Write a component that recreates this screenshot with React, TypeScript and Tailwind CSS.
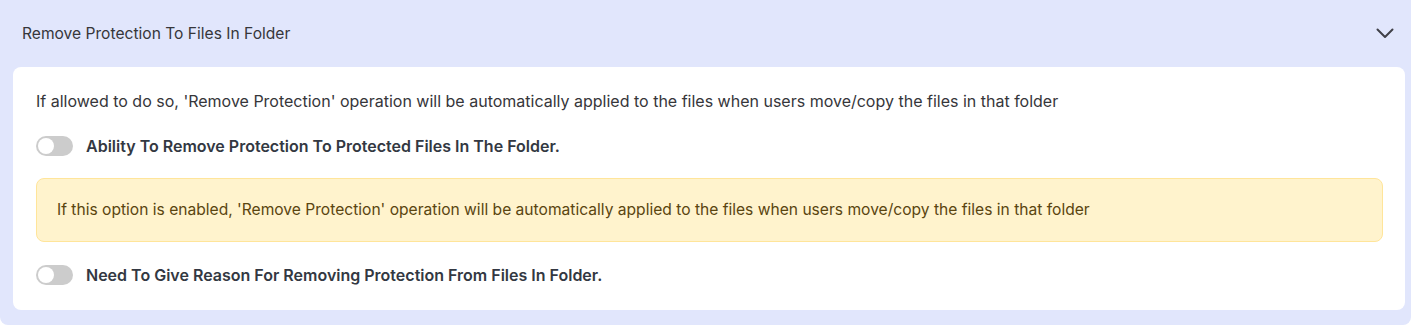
import React from "react";

function Toggle() {
  return (
    <div className="w-[37px] h-[20px] rounded-full bg-[#cccccc] p-[2px] flex items-center shrink-0">
      <div className="w-[16px] h-[16px] rounded-full bg-white" />
    </div>
  );
}

export default function App() {
  return (
    <div className="w-[1411px] h-[327px] bg-white" style={{ fontFamily: "Inter, 'Noto Sans', sans-serif" }}>
      <div className="h-[325px] bg-[#e1e6fc] rounded-b-[8px] flex flex-col">
        <div className="h-[67px] flex items-center justify-between pl-[22px] pr-[16px]">
          <span className="text-[15.6px] text-[#36363a] pt-[1px]">Remove Protection To Files In Folder</span>
          <svg width="18" height="11" viewBox="0 0 18 11" fill="none" className="mr-[1px]">
            <path d="M1.5 1.5 L9 9 L16.5 1.5" stroke="#404048" strokeWidth="2" strokeLinecap="round" strokeLinejoin="round" />
          </svg>
        </div>
        <div className="ml-[13px] mr-[6px] h-[243px] bg-white rounded-[8px] px-[23px] pt-[24px] flex flex-col">
          <p className="text-[16px] text-[#36363a] leading-[20px]">
            If allowed to do so, 'Remove Protection' operation will be automatically applied to the files when users move/copy the files in that folder
          </p>
          <div className="flex items-center gap-[13px] mt-[25px] h-[20px]">
            <Toggle />
            <span className="text-[16px] font-semibold text-[#333842] leading-[20px]">Ability To Remove Protection To Protected Files In The Folder.</span>
          </div>
          <div className="mt-[22px] h-[64px] mr-[-1px] bg-[#fff3cd] border border-[#ffe59a] rounded-[8px] flex items-center pl-[20px]">
            <span className="text-[15.6px] text-[#5a4510]">
              If this option is enabled, 'Remove Protection' operation will be automatically applied to the files when users move/copy the files in that folder
            </span>
          </div>
          <div className="flex items-center gap-[13px] mt-[23px] h-[20px]">
            <Toggle />
            <span className="text-[16px] font-semibold text-[#333842] leading-[20px]">Need To Give Reason For Removing Protection From Files In Folder.</span>
          </div>
        </div>
      </div>
    </div>
  );
}
